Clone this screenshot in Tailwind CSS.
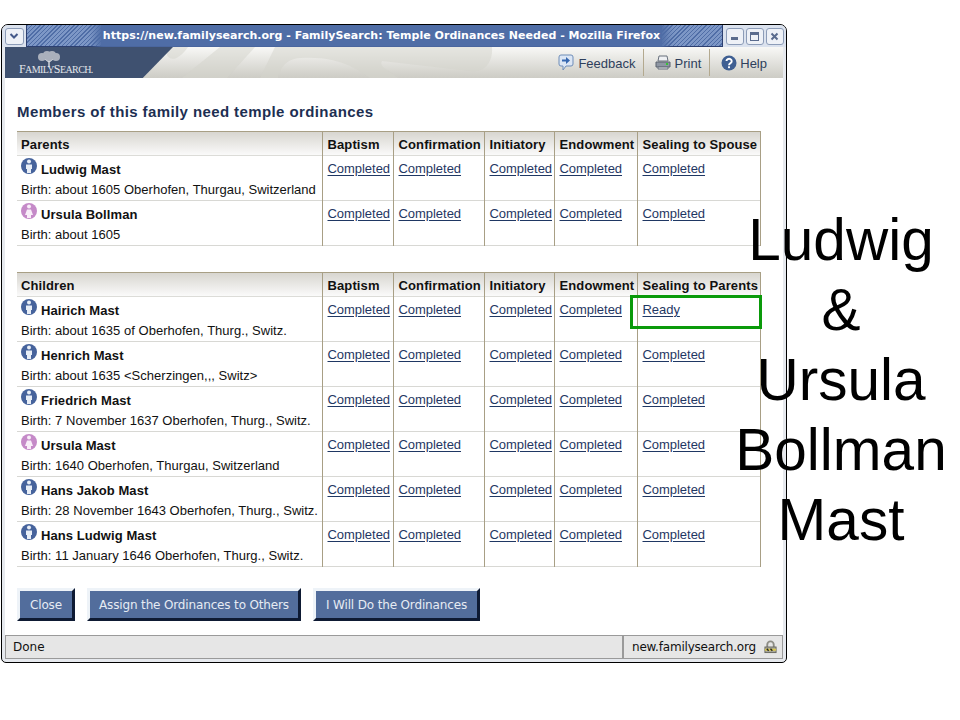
<!DOCTYPE html>
<html lang="en">
<head>
  <meta charset="UTF-8" />
  <title>FamilySearch: Temple Ordinances Needed</title>
  <script src="https://cdn.jsdelivr.net/npm/@tailwindcss/browser@4"></script>
</head>
<body class="bg-white">
<div class="relative w-[960px] h-[720px] overflow-hidden bg-white pt-[24px] pl-[1px] font-['Liberation_Sans',sans-serif]">

  <!-- Firefox window -->
  <div class="w-[786px] h-[639px] flex flex-col border border-black rounded-t-[7px] rounded-b-[5px] bg-[#e6e9ee] px-[3px] pb-[3px] overflow-hidden">
    <!-- title bar -->
    <div class="h-[22px] -mx-[3px] flex bg-[#dbe2ee]">
      <div class="w-[24px] flex items-center justify-center">
        <div class="w-[19px] h-[17px] flex items-center justify-center rounded-[3px] border border-[#8c9cb8] bg-[#eef1f7]">
          <svg width="10" height="8" viewBox="0 0 10 8"><path d="M1.500 2 5 5.500 8.500 2" fill="none" stroke="#44598a" stroke-width="2"/></svg>
        </div>
      </div>
      <div class="flex-1 flex justify-center pl-[14px] border-x border-b border-[#2c3f70] bg-[repeating-linear-gradient(135deg,#4f6da6_0,#4f6da6_1px,#7d97c6_1px,#7d97c6_3px)]">
        <span class="px-[2px] bg-[#4f6da6] shadow-[0_0_8px_5px_#4f6da6] text-white font-['DejaVu_Sans',sans-serif] font-bold text-[11px] tracking-[0.03px] leading-[22px] whitespace-nowrap">https://new.familysearch.org - FamilySearch: Temple Ordinances Needed - Mozilla Firefox</span>
      </div>
      <div class="w-[63px] flex items-center justify-center gap-[2px]">
        <div class="w-[18px] h-[17px] flex items-center justify-center rounded-[3px] border border-[#8c9cb8] bg-[#eef1f7]"><span class="block w-[7px] h-[3px] mt-[5px] bg-[#5a6b8e]"></span></div>
        <div class="w-[18px] h-[17px] flex items-center justify-center rounded-[3px] border border-[#8c9cb8] bg-[#eef1f7]"><span class="block w-[9px] h-[9px] border border-t-[3px] border-[#5a6b8e]"></span></div>
        <div class="w-[18px] h-[17px] flex items-center justify-center rounded-[3px] border border-[#8c9cb8] bg-[#eef1f7]">
          <svg width="9" height="9" viewBox="0 0 9 9"><path d="M1.500 1.500 7.500 7.500M7.500 1.500 1.500 7.500" stroke="#5a6b8e" stroke-width="2"/></svg>
        </div>
      </div>
    </div>

    <!-- page -->
    <div class="flex-1 flex flex-col bg-white min-h-0">
      <!-- header -->
      <div class="relative h-[31px] flex items-center justify-end overflow-hidden bg-gradient-to-b from-[#f8f8f6] to-[#cdccc5] text-[#2e3f5c] text-[13px]">
        <svg class="absolute left-[115px] top-0" width="400" height="31" viewBox="0 0 400 31"><path d="M47 8C50 14 58 14 68 0H47ZM62 31 100 0H135L107 31ZM140 31 155 0H372C373 15 365 26 350 24L262 14C258 20 270 24 278 31H250C240 24 220 8 180 11 165 12 160 22 158 31Z" fill="#d3d3cc" fill-opacity="0.5"/></svg>
        <div class="absolute left-0 top-0 h-[31px] w-[168px] bg-[#3f5170] [clip-path:polygon(0_0,100%_0,82%_100%,0_100%)]">
          <svg class="absolute left-[30px] top-[4px]" width="28" height="16" viewBox="0 0 28 16"><path d="M14 16V9M14 11 9 7M14 11l5-4" stroke="#d5d8de" stroke-width="1.500" fill="none"/><g fill="#aab0bc"><circle cx="7" cy="6" r="4"/><circle cx="12" cy="4" r="4"/><circle cx="17" cy="4" r="4"/><circle cx="21" cy="6" r="4"/><circle cx="14" cy="7" r="3"/></g></svg>
          <span class="absolute left-[14px] top-[16px] font-['Liberation_Serif',serif] text-[#e2e5ea] text-[12px] leading-[13px] tracking-[-0.6px] whitespace-nowrap">F<span class="text-[10px]">AMILY</span>S<span class="text-[10px]">EARCH.</span></span>
        </div>
        <div class="relative flex items-center h-[27px] pr-[16px]">
          <div class="flex items-center gap-[4px] pr-[7px] h-full border-r border-[#b3a98f]">
            <svg width="16" height="17" viewBox="0 0 16 17"><path d="M3 1h10a2 2 0 0 1 2 2v7a2 2 0 0 1-2 2H8l-3 4v-4H3a2 2 0 0 1-2-2V3a2 2 0 0 1 2-2Z" fill="#dbe6f5" stroke="#6f8db8"/><path d="M4 5.500h4V3l4 3.500-4 3.500V7.500H4Z" fill="#3768b0"/></svg>
            <span class="pt-[2px]">Feedback</span>
          </div>
          <div class="flex items-center gap-[4px] pl-[11px] pr-[8px] h-full border-r border-[#b3a98f]">
            <svg width="16" height="15" viewBox="0 0 16 15"><path d="M4 1h8l1 5H3Z" fill="#eef0f3" stroke="#68707c"/><path d="M1 7h14v5H1Z" fill="#8e96a3" stroke="#5a626e"/><path d="M3 12h10v2H3Z" fill="#dfe2e7" stroke="#68707c"/><rect x="11" y="8" width="2" height="2" fill="#35c435"/></svg>
            <span class="pt-[2px]">Print</span>
          </div>
          <div class="flex items-center gap-[3px] pl-[11px] h-full">
            <svg width="16" height="16" viewBox="0 0 17 17"><circle cx="8.500" cy="8.500" r="8" fill="#3f5f92"/><path d="M5.800 6.500a2.800 2.500 0 1 1 4.300 2.100c-1 .7-1.600 1-1.600 2.400" fill="none" stroke="#fff" stroke-width="2"/><rect x="7.500" y="12" width="2" height="2" fill="#fff"/></svg>
            <span class="pt-[2px]">Help</span>
          </div>
        </div>
      </div>

      <!-- content -->
      <div class="flex-1 px-[12px] pt-[25px]">
        <h1 class="text-[#1d2f52] font-bold text-[15px] leading-[18px] tracking-[0.4px] mb-[10px]">Members of this family need temple ordinances</h1>

        <table class="table-fixed border-collapse w-[743px] text-[13px] text-[#111] tracking-[0.02px] border-t border-[#a89f85] mb-[26px]">
          <colgroup><col class="w-[305px]"><col class="w-[71px]"><col class="w-[91px]"><col class="w-[70px]"><col class="w-[83px]"><col class="w-[123px]"></colgroup>
          <thead>
            <tr class="h-[24px] bg-gradient-to-b from-[#d8d6d0] to-[#fafafa] font-bold tracking-[0.12px] text-left border-b border-[#dcdcd8]">
              <th class="px-[4px] pt-[2px]">Parents</th><th class="pl-[5px] pt-[2px] border-l border-[#a89f85]">Baptism</th><th class="pl-[5px] pt-[2px] border-l border-[#a89f85]">Confirmation</th><th class="pl-[5px] pt-[2px] border-l border-[#a89f85]">Initiatory</th><th class="pl-[5px] pt-[2px] border-l border-[#a89f85]">Endowment</th><th class="pl-[5px] pt-[2px] border-x border-[#a89f85] whitespace-nowrap">Sealing to Spouse</th>
            </tr>
          </thead>
          <tbody id="parents"></tbody>
        </table>

        <table class="table-fixed border-collapse w-[743px] text-[13px] text-[#111] tracking-[0.02px] border-t border-[#a89f85]">
          <colgroup><col class="w-[305px]"><col class="w-[71px]"><col class="w-[91px]"><col class="w-[70px]"><col class="w-[83px]"><col class="w-[123px]"></colgroup>
          <thead>
            <tr class="h-[24px] bg-gradient-to-b from-[#d8d6d0] to-[#fafafa] font-bold tracking-[0.12px] text-left border-b border-[#dcdcd8]">
              <th class="px-[4px] pt-[2px]">Children</th><th class="pl-[5px] pt-[2px] border-l border-[#a89f85]">Baptism</th><th class="pl-[5px] pt-[2px] border-l border-[#a89f85]">Confirmation</th><th class="pl-[5px] pt-[2px] border-l border-[#a89f85]">Initiatory</th><th class="pl-[5px] pt-[2px] border-l border-[#a89f85]">Endowment</th><th class="pl-[5px] pt-[2px] border-x border-[#a89f85] whitespace-nowrap">Sealing to Parents</th>
            </tr>
          </thead>
          <tbody id="children"></tbody>
        </table>

        <!-- buttons -->
        <div class="flex gap-[12px] mt-[21px] text-[12px] tracking-[-0.15px] text-[#e6ebf3] font-['DejaVu_Sans',sans-serif]">
          <button class="w-[58px] h-[33px] bg-[#526d9c] border-[3px] border-t-[#eef3f8] border-l-[#eef3f8] border-r-[#0e1a33] border-b-[#0e1a33]">Close</button>
          <button class="w-[214px] h-[33px] bg-[#526d9c] border-[3px] border-t-[#eef3f8] border-l-[#eef3f8] border-r-[#0e1a33] border-b-[#0e1a33]">Assign the Ordinances to Others</button>
          <button class="w-[167px] h-[33px] bg-[#526d9c] border-[3px] border-t-[#eef3f8] border-l-[#eef3f8] border-r-[#0e1a33] border-b-[#0e1a33]">I Will Do the Ordinances</button>
        </div>
      </div>

      <!-- status bar -->
      <div class="h-[24px] flex bg-[#e6e6e6] border border-[#9a9a9a] text-[12px] leading-[22px] text-[#111] font-['DejaVu_Sans',sans-serif]">
        <div class="flex-1 pl-[7px]">Done</div>
        <div class="w-[160px] pl-[8px] flex items-center gap-[8px] border-l-2 border-[#9a9a9a] whitespace-nowrap tracking-[-0.2px]">
          new.familysearch.org
          <svg width="13" height="14" viewBox="0 0 14 14"><path d="M3.500 7V4.500a3.500 3.500 0 0 1 7 0V7" fill="none" stroke="#8c8c84" stroke-width="2"/><rect x="1" y="7" width="12" height="6" fill="#a9a99d" stroke="#66665e"/><path d="M1 9h12v2H1Z" fill="#d8c64c"/><path d="M3 9l2 2M7 9l2 2" stroke="#222" stroke-width="1.500"/></svg>
        </div>
      </div>
    </div>
  </div>

  <!-- annotation over the screenshot -->
  <div class="absolute left-[630px] top-[295px] w-[132px] h-[34px] border-[3px] border-[#0a9a0a]"></div>
  <div class="absolute left-[721px] top-[205px] w-[240px] text-center text-black text-[58.500px] leading-[70px]">Ludwig<br>&amp;<br>Ursula<br>Bollman<br>Mast</div>
</div>

<script>
  const parents = [
    ["m", "Ludwig Mast", "Birth: about 1605 Oberhofen, Thurgau, Switzerland"],
    ["f", "Ursula Bollman", "Birth: about 1605"],
  ];
  const children = [
    ["m", "Hairich Mast", "Birth: about 1635 of Oberhofen, Thurg., Switz.", "Ready"],
    ["m", "Henrich Mast", "Birth: about 1635 &lt;Scherzingen,,, Switz&gt;"],
    ["m", "Friedrich Mast", "Birth: 7 November 1637 Oberhofen, Thurg., Switz."],
    ["f", "Ursula Mast", "Birth: 1640 Oberhofen, Thurgau, Switzerland"],
    ["m", "Hans Jakob Mast", "Birth: 28 November 1643 Oberhofen, Thurg., Switz."],
    ["m", "Hans Ludwig Mast", "Birth: 11 January 1646 Oberhofen, Thurg., Switz."],
  ];

  function icon(sex) {
    if (sex === "m") {
      return `<svg class="shrink-0" width="16" height="16" viewBox="0 0 16 16"><circle cx="8" cy="8" r="8" fill="#46639c"/><circle cx="8" cy="3.600" r="2" fill="#e8eef6"/><path d="M5 6.500h6v4.500H10V15H6v-4H5Z" fill="#e8eef6"/></svg>`;
    }
    return `<svg class="shrink-0" width="16" height="16" viewBox="0 0 16 16"><circle cx="8" cy="8" r="8" fill="#c58ac8"/><circle cx="8" cy="3.600" r="2" fill="#f8eef8"/><path d="M6 6.500h4l2 5.500H10v3H6v-3H4Z" fill="#f8eef8"/></svg>`;
  }

  function link(txt) {
    return `<td class="align-top pl-[5px] pt-[5px] border-l border-[#a89f85] last:border-r"><a class="text-[#1f3763] underline underline-offset-2 leading-[16px] block w-fit tracking-[-0.04px]">${txt}</a></td>`;
  }

  function rows(list, id) {
    document.getElementById(id).innerHTML = list.map(p => `
      <tr class="h-[45px] border-b border-[#d8d8d4]">
        <td class="align-top pl-[4px] pt-[2px] whitespace-nowrap">
          <div class="flex items-start gap-[4px] h-[22px]">${icon(p[0])}<b class="mt-[4px] leading-[16px] tracking-[0.08px]">${p[1]}</b></div>
          <div class="leading-[18px] mt-[1px]">${p[2]}</div>
        </td>
        ${link("Completed")}${link("Completed")}${link("Completed")}${link("Completed")}${link(p[3] || "Completed")}
      </tr>`).join("");
  }
  rows(parents, "parents");
  rows(children, "children");
</script>
</body>
</html>
